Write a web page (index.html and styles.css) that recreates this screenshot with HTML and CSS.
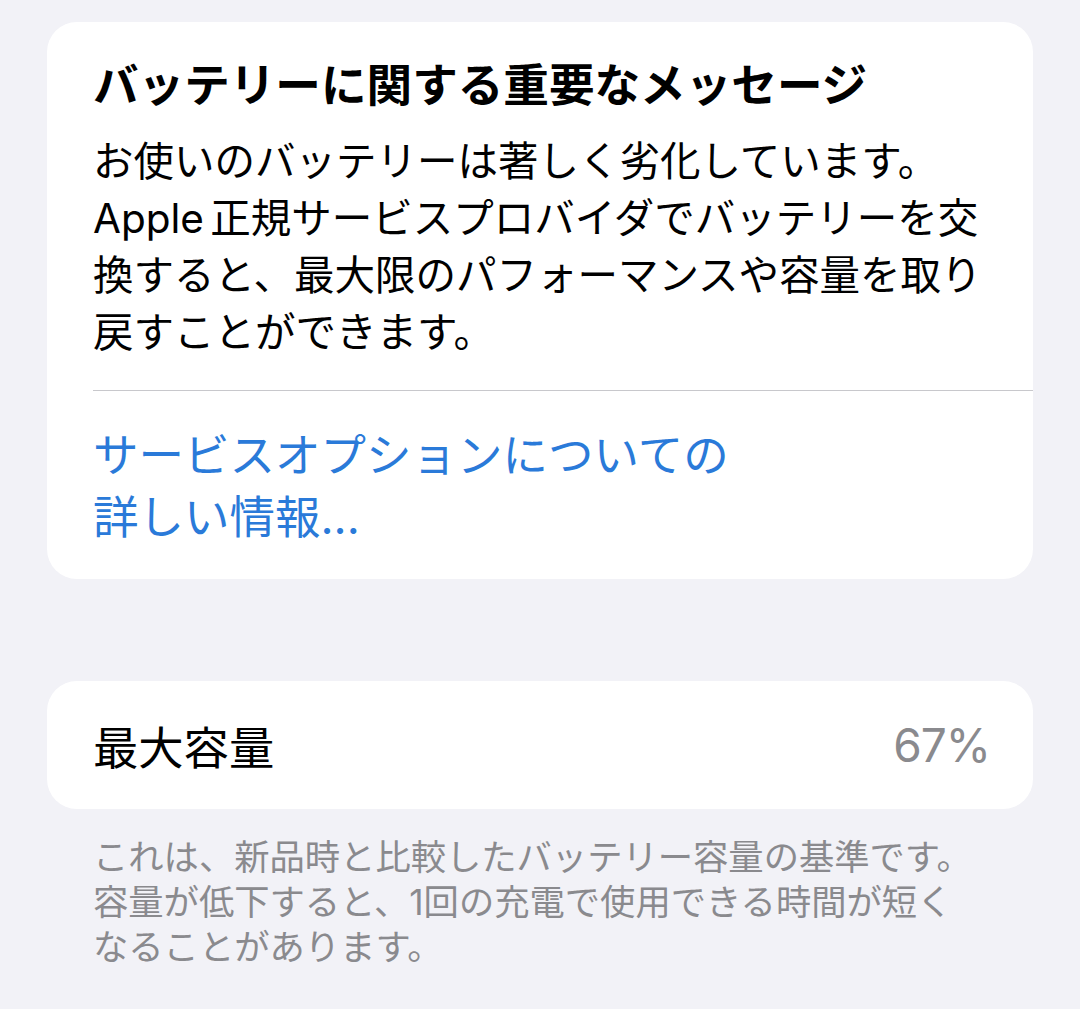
FILE: index.html
```html
<!DOCTYPE html>
<html lang="ja">
<head>
    <meta charset="UTF-8">
    <meta name="viewport" content="width=device-width, initial-scale=1.0">
    <title>バッテリーの状態</title>
    <link rel="stylesheet" href="styles.css">
</head>
<body>
    <div class="card message">
        <div class="message-body">
            <h1 class="message-title">バッテリーに関する重要なメッセージ</h1>
            <p class="message-text">
                <span>お使いのバッテリーは著しく劣化しています。</span>
                <span>Apple 正規サービスプロバイダでバッテリーを交</span>
                <span>換すると、最大限のパフォーマンスや容量を取り</span>
                <span>戻すことができます。</span>
            </p>
        </div>
        <div class="separator"></div>
        <a class="service-link" href="#">
            <span>サービスオプションについての</span>
            <span>詳しい情報...</span>
        </a>
    </div>

    <div class="card capacity">
        <span class="capacity-label">最大容量</span>
        <span class="capacity-value">67%</span>
    </div>
    <p class="footnote">
        <span>これは、新品時と比較したバッテリー容量の基準です。</span>
        <span>容量が低下すると、1回の充電で使用できる時間が短く</span>
        <span>なることがあります。</span>
    </p>
</body>
</html>
```

FILE: styles.css
```css
body {
    margin: 0;
    padding: 22px 47px;
    background-color: #f2f2f7;
    font-family: Inter, "Noto Sans CJK JP", sans-serif;
    color: #000;
}
.card {
    background-color: #fff;
    border-radius: 30px;
}
.message {
    padding: 36px 0 30px 46px;
}
.message-title {
    margin: 0;
    font-size: 45.6px;
    line-height: 56px;
    font-weight: 700;
    white-space: nowrap;
}
.message-text {
    margin: 19px 0 0 0;
    font-size: 40.5px;
    line-height: 57px;
    word-spacing: -5px;
}
.message-text span,
.service-link span,
.footnote span {
    display: block;
    white-space: nowrap;
}
.separator {
    height: 1px;
    background-color: #c8c8cc;
    margin-top: 29px;
}
.service-link {
    display: block;
    margin-top: 34px;
    color: #2a7ad9;
    text-decoration: none;
    font-size: 45.5px;
    line-height: 62px;
}
.capacity {
    margin-top: 102px;
    height: 128px;
    padding: 0 43px 0 46px;
    display: flex;
    align-items: center;
    justify-content: space-between;
    font-size: 45.3px;
}
.capacity-value {
    color: #8a8a8e;
    font-size: 46px;
    letter-spacing: -1px;
}
.footnote {
    margin: 26px 0 0 0;
    padding-left: 46px;
    font-size: 35.3px;
    line-height: 45px;
    color: #8a8a8e;
}
```
